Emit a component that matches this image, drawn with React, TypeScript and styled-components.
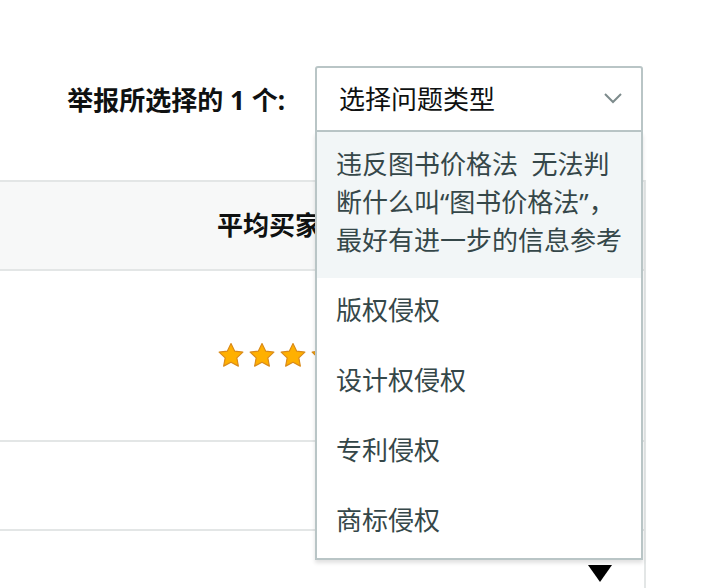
import styled, { createGlobalStyle } from "styled-components";

const GlobalStyle = createGlobalStyle`
    html, body {
        margin: 0;
        padding: 0;
        background: #ffffff;
    }
    body {
        font-family: "Noto Sans", "Noto Sans CJK SC", "Liberation Sans", sans-serif;
        color: #0f1111;
    }
`;

const Page = styled.div`
    width: 726px;
    height: 588px;
    overflow: hidden;
    padding-top: 66px;
    box-sizing: border-box;
`;

const Content = styled.div`
    width: 646px;
`;

const ReportRow = styled.div`
    display: flex;
    align-items: center;
    justify-content: flex-end;
    gap: 30px;
    padding-right: 3px;
    margin-bottom: 48px;
    position: relative;
    z-index: 2;
`;

const Label = styled.span`
    font-size: 26px;
    font-weight: 700;
    color: #0f1111;
`;

const SelectBox = styled.div`
    position: relative;
    width: 328px;
`;

const Trigger = styled.div`
    height: 66px;
    box-sizing: border-box;
    display: flex;
    align-items: center;
    justify-content: space-between;
    padding: 0 18px 2px 22px;
    border: 2px solid #b9c5c6;
    border-radius: 3px 3px 0 0;
    background: #ffffff;
    font-size: 26px;
    color: #0f1111;
`;

const Menu = styled.ul`
    position: absolute;
    top: 100%;
    left: 0;
    right: 0;
    margin: 0;
    padding: 0;
    list-style: none;
    background: #ffffff;
    border: 2px solid #b9c5c6;
    border-top: none;
    box-shadow: 0 3px 4px rgba(0, 0, 0, 0.12);
`;

const Option = styled.li<{ $active?: boolean }>`
    padding: 13px 16px 19px 19px;
    font-size: 26px;
    line-height: 38px;
    white-space: pre-wrap;
    color: #354749;
    background: ${(p) => (p.$active ? "#f2f6f7" : "#ffffff")};
`;

const Table = styled.div`
    border-top: 2px solid #e3e6e6;
    border-right: 2px solid #e3e6e6;
`;

const Row = styled.div<{ $height: number; $header?: boolean }>`
    display: grid;
    grid-template-columns: 217px 1fr;
    align-items: center;
    height: ${(p) => p.$height}px;
    background: ${(p) => (p.$header ? "#f7f8f8" : "#ffffff")};
    border-bottom: 2px solid #e3e6e6;
`;

const LastRow = styled.div`
    display: flex;
    justify-content: flex-end;
    padding: 34px 32px 0 0;
    height: 70px;
`;

const HeaderCell = styled.div`
    grid-column: 2;
    font-size: 26px;
    font-weight: 700;
    color: #0f1111;
    white-space: nowrap;
    padding-bottom: 4px;
`;

const Stars = styled.div`
    grid-column: 2;
    display: flex;
    gap: 3px;
`;

const Caret = styled.div`
    width: 0;
    height: 0;
    border-left: 12px solid transparent;
    border-right: 12px solid transparent;
    border-top: 17px solid #000000;
`;

const Star = () => (
    <svg width="28" height="27" viewBox="0 0 24 23">
        <path
            d="M12 1.2l3.1 6.5 7.1.9-5.2 4.9 1.3 7.1L12 17.2l-6.3 3.4 1.3-7.1-5.2-4.9 7.1-.9z"
            fill="#ffb000"
            stroke="#d98a1a"
            strokeWidth="1"
            strokeLinejoin="round"
        />
    </svg>
);

const Chevron = () => (
    <svg width="20" height="12" viewBox="0 0 20 12">
        <polyline points="2,2 10,10 18,2" fill="none" stroke="#7d8b8c" strokeWidth="2" />
    </svg>
);

const options = [
    "违反图书价格法  无法判断什么叫“图书价格法”，最好有进一步的信息参考",
    "版权侵权",
    "设计权侵权",
    "专利侵权",
    "商标侵权",
];

export default function App() {
    return (
        <>
            <GlobalStyle />
            <Page>
                <Content>
                    <ReportRow>
                        <Label>举报所选择的 1 个:</Label>
                        <SelectBox>
                            <Trigger>
                                <span>选择问题类型</span>
                                <Chevron />
                            </Trigger>
                            <Menu>
                                {options.map((opt, idx) => (
                                    <Option key={idx} $active={idx === 0}>
                                        {opt}
                                    </Option>
                                ))}
                            </Menu>
                        </SelectBox>
                    </ReportRow>
                    <Table>
                        <Row $height={87} $header>
                            <HeaderCell>平均买家评分</HeaderCell>
                        </Row>
                        <Row $height={169}>
                            <Stars>
                                <Star />
                                <Star />
                                <Star />
                                <Star />
                            </Stars>
                        </Row>
                        <Row $height={87} />
                        <LastRow>
                            <Caret />
                        </LastRow>
                    </Table>
                </Content>
            </Page>
        </>
    );
}
